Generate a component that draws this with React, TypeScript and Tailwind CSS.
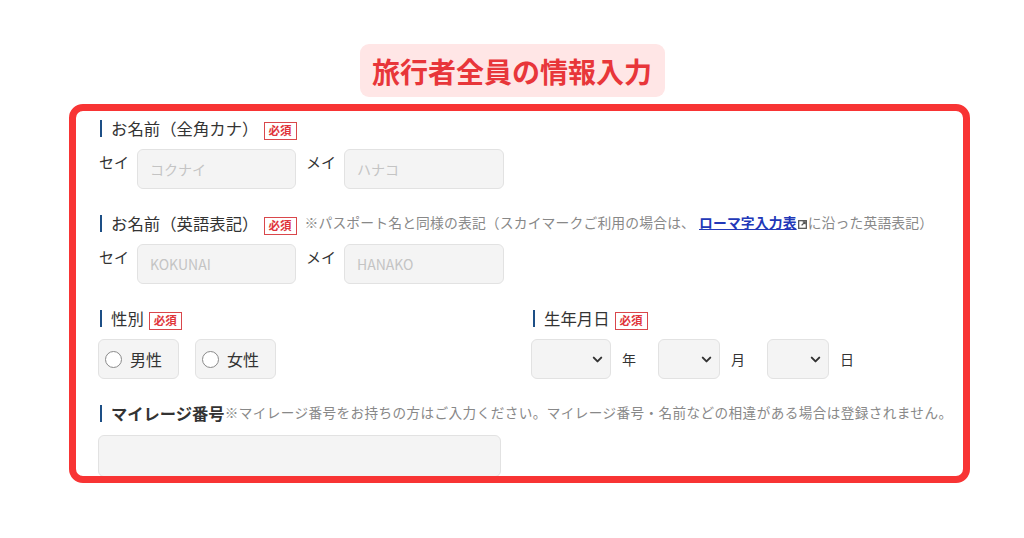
import React from "react";
import { ChevronDown } from "lucide-react";

const font = { fontFamily: '"Noto Sans CJK JP", "Noto Sans", sans-serif' };

function Badge() {
  return (
    <span className="inline-flex items-center justify-center w-[33px] h-[18px] border border-[#d9474b] text-[#e0353b] text-[11.5px] font-bold leading-none bg-white">
      必須
    </span>
  );
}

function Bar() {
  return <span className="ml-[2px] w-[2px] h-[17px] bg-[#1d4f86] mr-[9px]" />;
}

function Label({ children, badge = true, extra }: { children: React.ReactNode; badge?: boolean; extra?: React.ReactNode }) {
  return (
    <div className="flex items-center h-[18px]">
      <Bar />
      <span className="text-[16.4px] text-[#333] leading-none">{children}</span>
      {badge && (
        <span className="ml-[5px]">
          <Badge />
        </span>
      )}
      {extra}
    </div>
  );
}

function TextInput({ placeholder, w }: { placeholder: string; w: string }) {
  return (
    <div className={`${w} h-[40px] rounded-[6px] border border-[#e2e2e2] bg-[#f4f4f4] flex items-center pl-[12px] text-[14px] text-[#c4c4c4]`}>
      {placeholder}
    </div>
  );
}

function NameRow({ a, b }: { a: string; b: string }) {
  return (
    <div className="flex items-start mt-[12px] h-[40px]">
      <span className="w-[39px] pl-[1px] text-[15px] text-[#333] leading-5 mt-[3px]">セイ</span>
      <TextInput placeholder={a} w="w-[159px]" />
      <span className="w-[38px] ml-[10px] text-[15px] text-[#333] leading-5 mt-[3px]">メイ</span>
      <TextInput placeholder={b} w="w-[160px]" />
    </div>
  );
}

function Radio({ label }: { label: string }) {
  return (
    <div className="w-[81px] h-[40px] rounded-[6px] border border-[#e2e2e2] bg-[#f4f4f4] flex items-center pl-[6px]">
      <span className="w-[17px] h-[17px] rounded-full border border-[#8a8a8a] bg-white" />
      <span className="ml-[8px] text-[16px] text-[#333]">{label}</span>
    </div>
  );
}

function Select({ w, unit }: { w: string; unit: string }) {
  return (
    <div className="flex items-center">
      <div className={`${w} h-[40px] rounded-[6px] border border-[#e2e2e2] bg-[#f4f4f4] flex items-center justify-end pr-[5px]`}>
        <ChevronDown size={15} strokeWidth={3.2} color="#333" />
      </div>
      <span className="ml-[11px] text-[14px] text-[#333]">{unit}</span>
    </div>
  );
}

function ExtIcon() {
  return (
    <svg width="9" height="9" viewBox="0 0 10 10" className="inline-block mx-[1px] align-[-1px]">
      <rect x="0.75" y="0.75" width="8.5" height="8.5" fill="none" stroke="#555" strokeWidth="1.4" />
      <path d="M4 6 L8 2 M5.2 2 H8 V4.8" fill="none" stroke="#555" strokeWidth="1.4" />
    </svg>
  );
}

export default function App() {
  return (
    <div className="w-[1024px] h-[538px] bg-white overflow-hidden" style={font}>
      <div className="pt-[44px] flex justify-center">
        <div className="h-[53px] w-[305px] rounded-[9px] bg-[#ffe6e6] flex items-center justify-center">
          <span className="text-[28px] font-bold text-[#e8363a] leading-none">旅行者全員の情報入力</span>
        </div>
      </div>
      <div className="ml-[69px] mt-[7px] w-[901px] h-[379px] border-[7px] border-[#f83434] rounded-[14px] overflow-hidden">
        <div className="pl-[22px] pt-[8px]">
          <Label>お名前（全角カナ）</Label>
          <NameRow a="コクナイ" b="ハナコ" />

          <div className="mt-[25px]">
            <Label
              extra={
                <span className="ml-[8px] text-[13.8px] tracking-[0.15px] text-[#888] whitespace-nowrap leading-none">
                  ※パスポート名と同様の表記（スカイマークご利用の場合は、
                  <span className="text-[#2238b8] underline font-bold ml-[4px]">ローマ字入力表</span>
                  <ExtIcon />
                  に沿った英語表記）
                </span>
              }
            >
              お名前（英語表記）
            </Label>
            <NameRow a="KOKUNAI" b="HANAKO" />
          </div>

          <div className="mt-[25px] flex">
            <div className="w-[433px]">
              <Label>性別</Label>
              <div className="flex gap-[16px] mt-[12px]">
                <Radio label="男性" />
                <Radio label="女性" />
              </div>
            </div>
            <div>
              <Label>生年月日</Label>
              <div className="flex mt-[12px] gap-[22px]">
                <Select w="w-[80px]" unit="年" />
                <Select w="w-[62px]" unit="月" />
                <Select w="w-[62px]" unit="日" />
              </div>
            </div>
          </div>

          <div className="mt-[25px]">
            <div className="flex items-center h-[18px]">
              <Bar />
              <span className="text-[16.3px] font-bold text-[#333] leading-none">マイレージ番号</span>
              <span className="text-[13.6px] tracking-[0.42px] text-[#888] whitespace-nowrap leading-none">
                ※マイレージ番号をお持ちの方はご入力ください。マイレージ番号・名前などの相違がある場合は登録されません。
              </span>
            </div>
            <div className="mt-[13px] w-[403px] h-[42px] rounded-[6px] border border-[#e2e2e2] bg-[#f4f4f4]" />
          </div>
        </div>
      </div>
    </div>
  );
}
